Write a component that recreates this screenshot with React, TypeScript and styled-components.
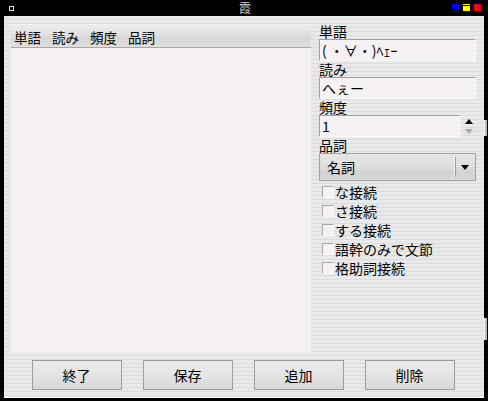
import React from 'react';
import styled, { createGlobalStyle } from 'styled-components';

const FONT = '"Noto Sans CJK JP", "Noto Sans", sans-serif';

const GlobalStyle = createGlobalStyle`
	html, body {
		margin: 0;
		padding: 0;
		background: #000;
	}
	body {
		font-family: ${FONT};
	}
`;

const Frame = styled.div`
	position: relative;
	width: 488px;
	height: 401px;
	background: #000;
	display: flex;
	flex-direction: column;
	overflow: hidden;
`;

const TitleBar = styled.div`
	height: 16px;
	display: flex;
	align-items: center;
	justify-content: space-between;
	padding: 0 7px 0 9px;
	box-sizing: border-box;
`;

const TitleText = styled.div`
	flex: 1;
	text-align: center;
	color: #d0d0d0;
	font-size: 12px;
	line-height: 16px;
	height: 16px;
	margin-left: 24px;
`;

const WinIcon = styled.div`
	width: 5px;
	height: 5px;
	border: 1px solid #e0e0e0;
	box-sizing: border-box;
	margin-top: 1px;
`;

const TitleButtons = styled.div`
	display: flex;
	gap: 4px;
	align-items: flex-start;
	height: 7px;
	margin-top: -1px;
`;

const TitleButton = styled.div<{ $color: string; $kind: 'min' | 'max' | 'close' }>`
	width: 7px;
	height: 7px;
	box-sizing: border-box;
	background: ${p => p.$color};
	${p => p.$kind === 'min' && `height: 5px; box-shadow: 0 2px 0 #000, 0 3px 0 ${p.$color};`}
	${p => p.$kind === 'max' && `border-top: 1px solid ${p.$color}; box-shadow: inset 0 1px 0 #000;`}
`;

const Window = styled.div`
	flex: 1;
	margin: 0 4px 3px 4px;
	background: repeating-linear-gradient(
		to bottom,
		#e9e9e9 0px,
		#e9e9e9 3px,
		#dcdcdc 3px,
		#dcdcdc 4px
	);
	border-bottom: 1px solid #fff;
	display: flex;
	flex-direction: column;
	padding: 8px 8px 0 7px;
	box-sizing: border-box;
`;

const Body = styled.div`
	display: flex;
	gap: 8px;
`;

const List = styled.div`
	width: 300px;
	height: 328px;
	background: #f6f2f4;
	display: flex;
	flex-direction: column;
`;

const ListHeader = styled.div`
	height: 24px;
	box-sizing: border-box;
	border-top: 1px solid #f2f2f2;
	border-bottom: 1px solid #a8a6a8;
	background: linear-gradient(to bottom, #ebebeb 0%, #e4e4e4 35%, #d6d6d6 60%, #dedede 100%);
	display: flex;
	align-items: center;
	gap: 11px;
	padding: 1px 0 0 3px;
	font-size: 13.5px;
	line-height: 16px;
	color: #000;
`;

const Side = styled.div`
	width: 157px;
	display: flex;
	flex-direction: column;
`;

const Label = styled.div`
	font-size: 14px;
	line-height: 15px;
	height: 15px;
	color: #000;
`;

const FieldRow = styled.div`
	display: flex;
	align-items: stretch;
	margin-bottom: 1px;
`;

const TextBox = styled.div<{ $narrow?: boolean }>`
	width: ${p => (p.$narrow ? '141px' : '157px')};
	height: 22px;
	box-sizing: border-box;
	background: #f6f2f4;
	border: 1px solid #9e9e9e;
	border-right-color: #fcfcfc;
	border-bottom-color: #fcfcfc;
	padding: 0 0 0 2px;
	font-size: 14px;
	line-height: 20px;
	color: #000;
	white-space: nowrap;
	overflow: hidden;
`;

const Spinner = styled.div`
	flex: 1;
	display: flex;
	flex-direction: column;
	align-items: center;
	justify-content: center;
	gap: 5px;
	padding-left: 2px;
`;

const Arrow = styled.div<{ $up?: boolean; $color: string }>`
	width: 0;
	height: 0;
	border-left: 4px solid transparent;
	border-right: 4px solid transparent;
	${p => (p.$up ? `border-bottom: 5px solid ${p.$color};` : `border-top: 5px solid ${p.$color};`)}
`;

const Select = styled.div`
	height: 28px;
	box-sizing: border-box;
	border: 1px solid #a2a2a2;
	background: linear-gradient(to bottom, #e6e6e6 0%, #e0e0e0 45%, #d2d2d2 70%, #dadada 100%);
	display: flex;
	align-items: center;
	padding-left: 7px;
	font-size: 14px;
	line-height: 16px;
	margin-bottom: 4px;
`;

const SelectValue = styled.div`
	flex: 1;
`;

const SelectDivider = styled.div`
	width: 1px;
	height: 20px;
	background: #9a9a9a;
	box-shadow: -1px 0 0 #fafafa;
	margin-right: 5px;
`;

const SelectArrow = styled.div`
	width: 0;
	height: 0;
	border-left: 4px solid transparent;
	border-right: 4px solid transparent;
	border-top: 5px solid #000;
	margin-right: 6px;
`;

const CheckList = styled.div`
	display: flex;
	flex-direction: column;
	gap: 5px;
	padding-left: 3px;
`;

const CheckRow = styled.label`
	display: flex;
	align-items: center;
	height: 14px;
	font-size: 14px;
	line-height: 14px;
	color: #000;
`;

const CheckBox = styled.span`
	width: 12px;
	height: 12px;
	box-sizing: border-box;
	background: #f6f2f4;
	border: 1px solid #a8a8a8;
	border-right-color: #fafafa;
	border-bottom-color: #fafafa;
	margin-right: 1px;
`;

const ButtonRow = styled.div`
	display: flex;
	justify-content: center;
	gap: 21px;
	margin-top: 8px;
	padding-right: 1px;
`;

const Button = styled.button`
	width: 90px;
	height: 30px;
	box-sizing: border-box;
	border: 1px solid #9c9c9c;
	background: linear-gradient(to bottom, #ececec 0%, #e4e4e4 50%, #d8d8d8 100%);
	font-family: ${FONT};
	font-size: 14px;
	line-height: 16px;
	color: #000;
	padding: 0;
`;

const Grip = styled.div<{ $top: number; $height: number }>`
	position: absolute;
	right: 1px;
	top: ${p => p.$top}px;
	width: 2px;
	height: ${p => p.$height}px;
	background: #bcbcbc;
	border-left: 1px solid #f0f0f0;
`;

const columns = ['単語', '読み', '頻度', '品詞'];
const options = ['な接続', 'さ接続', 'する接続', '語幹のみで文節', '格助詞接続'];
const buttons = ['終了', '保存', '追加', '削除'];

const App: React.FC = () => {
	return (
		<>
			<GlobalStyle />
			<Frame>
				<TitleBar>
					<WinIcon />
					<TitleText>霞</TitleText>
					<TitleButtons>
						<TitleButton $color="#0000ff" $kind="min" />
						<TitleButton $color="#ffff00" $kind="max" />
						<TitleButton $color="#ff0000" $kind="close" />
					</TitleButtons>
				</TitleBar>
				<Window>
					<Body>
						<List>
							<ListHeader>
								{columns.map(c => <span key={c}>{c}</span>)}
							</ListHeader>
						</List>
						<Side>
							<Label>単語</Label>
							<FieldRow>
								<TextBox>(&nbsp;・∀・)ﾍｪｰ</TextBox>
							</FieldRow>
							<Label>読み</Label>
							<FieldRow>
								<TextBox>へぇー</TextBox>
							</FieldRow>
							<Label>頻度</Label>
							<FieldRow>
								<TextBox $narrow>1</TextBox>
								<Spinner>
									<Arrow $up $color="#000" />
									<Arrow $color="#a8a8a8" />
								</Spinner>
							</FieldRow>
							<Label>品詞</Label>
							<Select>
								<SelectValue>名詞</SelectValue>
								<SelectDivider />
								<SelectArrow />
							</Select>
							<CheckList>
								{options.map(o => (
									<CheckRow key={o}>
										<CheckBox />
										{o}
									</CheckRow>
								))}
							</CheckList>
						</Side>
					</Body>
					<ButtonRow>
						{buttons.map(b => <Button key={b}>{b}</Button>)}
					</ButtonRow>
				</Window>
				<Grip $top={120} $height={16} />
				<Grip $top={318} $height={22} />
			</Frame>
		</>
	);
};

export default App;
